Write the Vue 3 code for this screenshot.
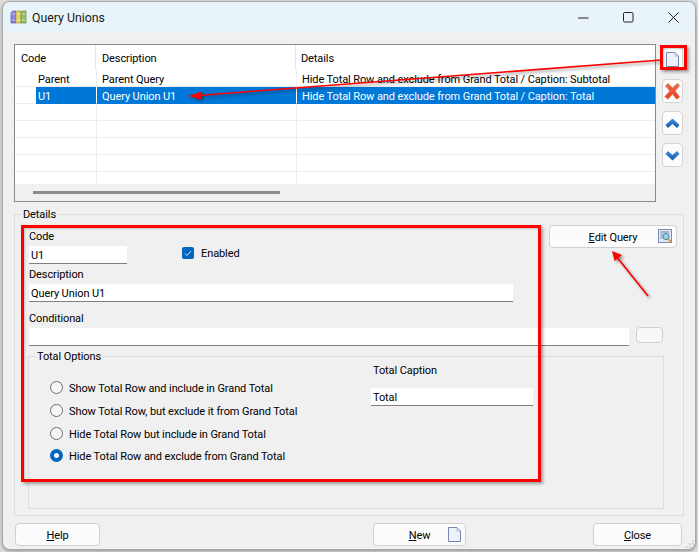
<script setup>
const rows = [
  { code: 'Parent', desc: 'Parent Query', details: 'Hide Total Row and exclude from Grand Total / Caption: Subtotal' },
  { code: 'U1', desc: 'Query Union U1', details: 'Hide Total Row and exclude from Grand Total / Caption: Total', selected: true },
  { code: '', desc: '', details: '' }, { code: '', desc: '', details: '' }, { code: '', desc: '', details: '' },
  { code: '', desc: '', details: '' }, { code: '', desc: '', details: '' }
]
const radios = [
  { label: 'Show Total Row and include in Grand Total' },
  { label: 'Show Total Row, but exclude it from Grand Total' },
  { label: 'Hide Total Row but include in Grand Total' },
  { label: 'Hide Total Row and exclude from Grand Total', on: true }
]
</script>

<template>
  <div class="desk">
    <div class="window">
      <header class="titlebar">
        <svg class="appicon" width="17" height="16" viewBox="0 0 17 16">
          <path d="M1 3.500 3 2h3v12H1z" fill="#8d84d8" stroke="#5f56a8" stroke-width=".7"/>
          <path d="M6 2.500 8 2h3v12H6z" fill="#e3d26a" stroke="#a89a3a" stroke-width=".7"/>
          <path d="M11 2.500 13 2h3v12h-5z" fill="#93c26a" stroke="#5f8d3d" stroke-width=".7"/>
          <path d="M1.500 5h4M1.500 11h4M6.500 5h4M6.500 11h4M11.500 5h4M11.500 11h4" stroke="#fff" stroke-opacity=".6" stroke-width=".8"/>
        </svg>
        <span class="title">Query Unions</span>
        <div class="winctl">
          <svg width="11" height="11" viewBox="0 0 11 11"><path d="M0 6h10.500" stroke="#222"/></svg>
          <svg width="11" height="11" viewBox="0 0 11 11"><rect x=".5" y=".5" width="9.500" height="9.500" rx="1.200" fill="none" stroke="#222"/></svg>
          <svg width="11" height="11" viewBox="0 0 11 11"><path d="M.5.5l10 10M10.500.5l-10 10" stroke="#222"/></svg>
        </div>
      </header>

      <main class="content">
        <section class="top">
          <div class="grid">
            <div class="g-head">
              <div class="c c0 hcode">Code</div>
              <div class="c c2">Description</div>
              <div class="c c3">Details</div>
            </div>
            <div class="g-rows">
              <div v-for="(r, i) in rows" :key="i" class="g-row">
                <div class="ind"></div>
                <div class="c c1" :class="{ sel: r.selected }">{{ r.code }}</div>
                <div class="c c2" :class="{ sel: r.selected }">{{ r.desc }}</div>
                <div class="c c3" :class="{ sel: r.selected }">{{ r.details }}</div>
              </div>
            </div>
            <div class="g-scroll"><div class="thumb"></div></div>
          </div>
          <div class="side">
            <button class="sbtn">
              <svg width="13" height="15" viewBox="0 0 13 15"><path d="M.5.5h8.500l3.500 3.500v10.500H.5z" fill="#edf1f9" stroke="#7488b0"/><path d="M9 1v3h3" fill="none" stroke="#b4c0d8"/></svg>
            </button>
            <button class="sbtn">
              <svg width="17" height="18" viewBox="0 0 17 18">
                <defs><linearGradient id="xg" x1="0" y1="0" x2="0" y2="1"><stop offset="0" stop-color="#f2694a"/><stop offset="1" stop-color="#e8431d"/></linearGradient></defs>
                <path d="M1 4 4 1l4.500 4.500L13.500 1 16 3.500l-4.500 5.500 4.500 6-3.500 2.500-4-5-4.500 5L.5 14.500 5.500 9z" fill="url(#xg)" stroke="#d9c7bd" stroke-width=".6"/>
              </svg>
            </button>
            <button class="sbtn">
              <svg width="15" height="11" viewBox="0 0 15 11"><defs><linearGradient id="ug" x1="0" y1="0" x2="0" y2="1"><stop offset="0" stop-color="#3f8fdf"/><stop offset="1" stop-color="#1558ae"/></linearGradient></defs><path d="M7.500.5 14.500 7l-2.500 3-4.500-4-4.500 4L.5 7z" fill="url(#ug)"/></svg>
            </button>
            <button class="sbtn">
              <svg width="15" height="11" viewBox="0 0 15 11"><path d="M7.500 10.500 14.500 4 12 1 7.500 5 3 1 .5 4z" fill="url(#ug)"/></svg>
            </button>
          </div>
        </section>

        <fieldset class="details">
          <legend>Details</legend>
          <div class="upper">
            <div class="form">
              <label class="lbl">Code</label>
              <div class="code-row">
                <input class="inp code" value="U1" readonly />
                <span class="check"><svg width="8" height="7" viewBox="0 0 8 7"><path d="M1 3.500 3 5.500 7 1" fill="none" stroke="#cfe3f7" stroke-width="1"/></svg></span>
                <span class="enabled">Enabled</span>
              </div>
              <label class="lbl">Description</label>
              <input class="inp" value="Query Union U1" readonly />
            </div>
            <button class="btn edit">
              <span><u>E</u>dit Query</span>
              <svg class="ico" width="15" height="15" viewBox="0 0 15 15"><rect x=".5" y=".5" width="13" height="13" fill="#dfe8f5" stroke="#7a8fb8"/><path d="M2.500 3h9M2.500 5h2M2.500 7h2M2.500 9h2" stroke="#6d7fa5"/><circle cx="8" cy="7.500" r="3" fill="#9fd4ee" stroke="#3f78a8"/><path d="m10.300 10 3 3.300" stroke="#e08a3c" stroke-width="1.800"/></svg>
            </button>
          </div>
          <label class="lbl cond-lbl">Conditional</label>
          <div class="cond-row">
            <input class="inp cond" value="" readonly />
            <button class="mini"></button>
          </div>
          <fieldset class="totals">
            <legend>Total Options</legend>
            <div class="tot-body">
              <div class="radios">
                <div v-for="r in radios" :key="r.label" class="radio-row">
                  <span class="radio" :class="{ on: r.on }"></span>
                  <span class="rtext">{{ r.label }}</span>
                </div>
              </div>
              <div class="caption">
                <label class="lbl capl">Total Caption</label>
                <input class="inp capi" value="Total" readonly />
              </div>
            </div>
          </fieldset>
        </fieldset>

        <footer class="footer">
          <button class="btn help"><span><u>H</u>elp</span></button>
          <button class="btn new">
            <span><u>N</u>ew</span>
            <svg class="ico newico" width="13" height="15" viewBox="0 0 13 15"><path d="M.5.5h8.500l3.500 3.500v10.500H.5z" fill="#edf1f9" stroke="#7488b0"/><path d="M9 1v3h3" fill="none" stroke="#b4c0d8"/></svg>
          </button>
          <button class="btn close"><span><u>C</u>lose</span></button>
        </footer>
      </main>
    </div>

    <svg class="grip" width="9" height="9" viewBox="0 0 9 9"><path d="M7 1h1.500M4 4h1.500M7 4h1.500M1 7h1.500M4 7h1.500M7 7h1.500" stroke="#bdbdbd" stroke-width="1.500"/></svg>
    <div class="redbox box-a"></div>
    <div class="redbox box-b"></div>
    <svg class="arrows" width="698" height="552" viewBox="0 0 698 552">
      <path d="M661 60 198 95.500" stroke="#f00" stroke-width="1.600" fill="none"/>
      <path d="M188 96 202 91.500 201 99.500z" fill="#f00"/>
      <path d="M648 296 616 256" stroke="#f00" stroke-width="1.600" fill="none"/>
      <path d="M612 251 622 255 614.500 261z" fill="#f00"/>
    </svg>
  </div>
</template>

<style>
html, body { margin: 0; padding: 0; background: #e9e9e9; }
</style>

<style scoped>
.desk {
  position: relative;
  width: 698px;
  height: 552px;
  overflow: hidden;
  background: #dcdcdc;
  font-family: Roboto, "Noto Sans", sans-serif;
  font-size: 11px;
  letter-spacing: -.1px;
  color: #000;
  padding: 1px 2px 2px 2px;
  box-sizing: border-box;
}
.window {
  width: 694px;
  height: 549px;
  box-sizing: border-box;
  background: #f0f0f0;
  border: 1px solid #a9a9a9;
  border-radius: 8px;
  overflow: hidden;
  box-shadow: 0 1px 3px rgba(0,0,0,.35);
  display: flex;
  flex-direction: column;
}
.titlebar {
  height: 30px;
  flex: none;
  background: #e8f4f9;
  display: flex;
  align-items: center;
  padding-left: 7px;
}
.appicon { flex: none; }
.title { margin-left: 5px; padding-top: 2px; font-size: 12.300px; letter-spacing: 0; color: #1a1a1a; }
.winctl {
  margin-left: auto;
  display: flex;
  gap: 34px;
  padding-right: 16px;
}
.content {
  flex: 1;
  min-height: 0;
  display: flex;
  flex-direction: column;
  padding: 12px 0 0 11px;
}
.top { display: flex; align-items: flex-start; }
.grid {
  width: 642px;
  height: 158px;
  box-sizing: border-box;
  border: 1px solid #8a8a8a;
  background: #fff;
  display: flex;
  flex-direction: column;
}
.g-head { height: 25px; display: flex; flex: none; }
.g-head .c { line-height: 28px; border-right: 1px solid #e6e6e6; height: 25px; }
.g-head .c3 { border-right: 0; }
.g-rows { flex: 1; min-height: 0; overflow: hidden; }
.g-row { display: flex; height: 17px; box-sizing: border-box; }
.ind { width: 21px; border-bottom: 1px solid #ededed; box-sizing: border-box; flex: none; }
.c {
  box-sizing: border-box;
  white-space: nowrap;
  overflow: hidden;
  line-height: 20px;
  border-bottom: 1px solid #ededed;
  flex: none;
}
.g-head .c { border-bottom: 0; }
.c0 { width: 81px; padding-left: 6px; }
.c1 { width: 60px; padding-left: 2px; border-right: 1px solid #ededed; }
.c2 { width: 200px; padding-left: 6px; border-right: 1px solid #ededed; }
.c3 { width: 359px; padding-left: 5px; }
.sel { background: #0078d7; color: #fff; border-right-color: #fff; border-bottom-color: #0078d7; }
.g-row .c1 { width: 61px; }
.g-row .c2 { padding-left: 5px; }
.g-row .c3 { width: 358px; }
.g-scroll {
  height: 17px;
  flex: none;
  background: #f0f0f0;
  position: relative;
  padding: 7px 0 0 18px;
  box-sizing: border-box;
}
.thumb { width: 247px; height: 3px; background: #8c8c8c; }
.side {
  display: flex;
  flex-direction: column;
  gap: 8px;
  margin: 3px 0 0 6px;
}
.sbtn {
  width: 21px;
  height: 24px;
  padding: 0;
  border: 1px solid #d3d3d3;
  border-radius: 4px;
  background: #fcfcfc;
  display: flex;
  align-items: center;
  justify-content: center;
}
fieldset { margin: 0; min-width: 0; box-sizing: border-box; border: 1px solid #dcdcdc; }
legend { padding: 0 2px; line-height: 18px; height: 16px; }
.details {
  width: 670px;
  height: 310px;
  margin-top: 4px;
  padding: 7px 6px 6px 14px;
  position: relative;
  display: flex;
  flex-direction: column;
}
.details > legend { margin-left: -8px; }
.upper { display: flex; align-items: flex-start; }
.form { width: 484px; display: flex; flex-direction: column; }
.lbl { display: block; line-height: 16px; height: 14px; }
.inp {
  display: block;
  box-sizing: border-box;
  width: 100%;
  height: 18px;
  margin-top: 3px;
  border: 0;
  border-bottom: 1px solid #808080;
  background: #fff;
  padding: 2px 2px 0;
  font: inherit;
  letter-spacing: inherit;
  color: inherit;
  outline: 0;
}
.code-row { display: flex; align-items: flex-start; margin-bottom: 3px; }
.code { width: 98px; }
.check {
  width: 12px;
  height: 12px;
  margin: 4px 0 0 55px;
  background: #0067c0;
  border-radius: 2px;
  display: flex;
  align-items: center;
  justify-content: center;
}
.enabled { margin: 4px 0 0 7px; line-height: 14px; }
.btn {
  box-sizing: border-box;
  height: 23px;
  position: relative;
  padding: 2px 0 0;
  border: 1px solid #d0d0d0;
  border-radius: 4px;
  background: #fcfcfc;
  font: inherit;
  letter-spacing: inherit;
  color: inherit;
}
.ico { position: absolute; right: 3px; top: 3px; }
.edit { width: 128px; margin: -4px 0 0 36px; }
.cond-lbl { margin-top: 9px; }
.cond-row { display: flex; align-items: flex-start; }
.cond { width: 600px; }
.mini {
  width: 27px;
  height: 16px;
  margin: 2px 0 0 7px;
  padding: 0;
  border: 1px solid #d0d0d0;
  border-radius: 4px;
  background: #f8f8f8;
}
.totals {
  width: 636px;
  height: 161px;
  margin: 2px 0 0 -1px;
  padding: 0;
  position: relative;
}
.totals > legend { margin-left: 6px; }
.tot-body { display: flex; }
.radios {
  width: 342px;
  padding: 13px 0 0 21px;
  box-sizing: border-box;
  display: flex;
  flex-direction: column;
}
.radio-row { height: 20px; display: flex; align-items: center; gap: 6px; margin-bottom: 3px; white-space: nowrap; }
.radio-row:nth-child(3) { margin-bottom: 2px; }
.rtext { padding-top: 3px; }
.radio {
  width: 13px;
  height: 13px;
  box-sizing: border-box;
  border: 1px solid #6e6e6e;
  border-radius: 50%;
  background: #f6f6f6;
  flex: none;
}
.radio.on { border: 4px solid #0067c0; background: #fff; }
.caption { width: 162px; }
.capl { padding-left: 2px; margin-top: 0; line-height: 14px; }
.capi { margin-top: 10px; }
.footer {
  display: flex;
  margin-top: 7px;
  padding-left: 1px;
}
.help { width: 85px; }
.new { width: 93px; margin-left: 273px; }
.newico { right: 4px; }
.close { width: 89px; margin-left: 127px; }
.grip { position: absolute; right: 4px; bottom: 3px; }
.redbox {
  position: absolute;
  box-sizing: border-box;
  border: 3px solid #f00;
  box-shadow: 2px 2px 3px rgba(0,0,0,.35), inset 1px 1px 2px rgba(0,0,0,.2);
}
.box-a { left: 21px; top: 225px; width: 520px; height: 257px; }
.box-b { left: 660px; top: 45px; width: 27px; height: 25px; }
.arrows {
  position: absolute;
  left: 0;
  top: 0;
  pointer-events: none;
  filter: drop-shadow(2px 2px 1.500px rgba(0,0,0,.4));
}
</style>
